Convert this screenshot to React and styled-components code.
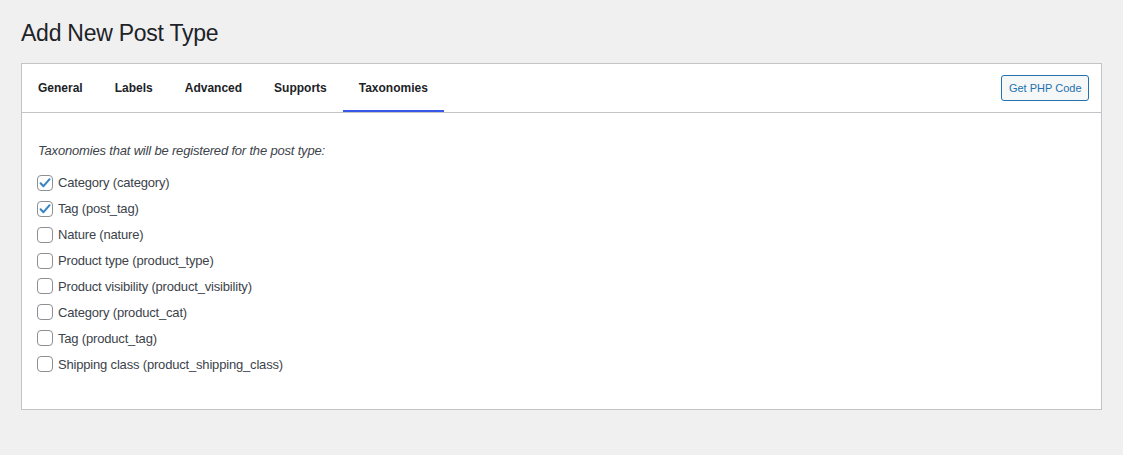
import React, { useState } from 'react';
import styled, { createGlobalStyle } from 'styled-components';

const GlobalStyle = createGlobalStyle`
  body {
    margin: 0;
    background: #f0f0f1;
    font-family: "Liberation Sans", Arial, sans-serif;
    color: #3c434a;
  }
`;

const TABS = ['General', 'Labels', 'Advanced', 'Supports', 'Taxonomies'];

const TAXONOMIES = [
  { label: 'Category (category)', checked: true },
  { label: 'Tag (post_tag)', checked: true },
  { label: 'Nature (nature)', checked: false },
  { label: 'Product type (product_type)', checked: false },
  { label: 'Product visibility (product_visibility)', checked: false },
  { label: 'Category (product_cat)', checked: false },
  { label: 'Tag (product_tag)', checked: false },
  { label: 'Shipping class (product_shipping_class)', checked: false },
];

const App = () => {
  const [active, setActive] = useState('Taxonomies');
  const [items, setItems] = useState(TAXONOMIES);

  const toggle = (i) => {
    setItems(items.map((it, idx) => (idx === i ? { ...it, checked: !it.checked } : it)));
  };

  return (
    <Wrap>
      <GlobalStyle />
      <Title>Add New Post Type</Title>
      <Card>
        <TabBar>
          <Tabs>
            {TABS.map((t) => (
              <Tab key={t} $active={t === active} onClick={() => setActive(t)}>
                {t}
              </Tab>
            ))}
          </Tabs>
          <CodeButton>Get PHP Code</CodeButton>
        </TabBar>

        <Body>
          <Intro>Taxonomies that will be registered for the post type:</Intro>
          <List>
            {items.map((it, i) => (
              <Row key={it.label} onClick={() => toggle(i)}>
                <Box>
                  {it.checked && (
                    <svg width="16" height="16" viewBox="0 0 16 16">
                      <path
                        d="M3.6 8.2l2.9 3L12.6 4.2"
                        fill="none"
                        stroke="#3582c4"
                        strokeWidth="2"
                        strokeLinecap="round"
                        strokeLinejoin="round"
                      />
                    </svg>
                  )}
                </Box>
                {it.label}
              </Row>
            ))}
          </List>
        </Body>
      </Card>
    </Wrap>
  );
};

export default App;

// --- styles ---

const Wrap = styled.div`
  padding: 10px 21px 20px 21px;
`;

const Title = styled.h1`
  margin: 0 0 10px;
  padding: 9px 0 4px;
  font-size: 23px;
  font-weight: 400;
  line-height: 1.3;
  letter-spacing: -0.25px;
  color: #1d2327;
`;

const Card = styled.div`
  background: #fff;
  border: 1px solid #c3c4c7;
`;

const TabBar = styled.div`
  display: flex;
  align-items: center;
  justify-content: space-between;
  border-bottom: 1px solid #c3c4c7;
  padding-right: 12px;
`;

const Tabs = styled.div` display: flex; `;

const Tab = styled.div`
  height: 48px;
  box-sizing: border-box;
  padding: 2px 16px 0;
  display: flex;
  align-items: center;
  font-size: 12px;
  font-weight: 600;
  color: #1d2327;
  cursor: pointer;
  border-bottom: 2px solid ${(p) => (p.$active ? '#3858e9' : 'transparent')};
`;

const CodeButton = styled.button`
  height: 26px;
  padding: 0 6.5px;
  font-family: inherit;
  font-size: 11px;
  color: #2271b1;
  background: #f6f7f7;
  border: 1px solid #2271b1;
  border-radius: 3px;
  cursor: pointer;
`;

const Body = styled.div`
  padding: 29px 16px 32px;
`;

const Intro = styled.p`
  margin: 0 0 10px;
  font-size: 13px;
  line-height: 18px;
  letter-spacing: -0.18px;
  font-style: italic;
  color: #3c434a;
`;

const List = styled.div` display: flex; flex-direction: column; `;

const Row = styled.label`
  display: flex;
  align-items: center;
  gap: 5px;
  height: 25.9px;
  font-size: 13px;
  letter-spacing: -0.18px;
  color: #3c434a;
  cursor: pointer;
`;

const Box = styled.span`
  width: 16px;
  height: 16px;
  margin-left: -1px;
  box-sizing: border-box;
  border: 1px solid #8c8f94;
  border-radius: 4px;
  background: #fff;
  display: flex;
  align-items: center;
  justify-content: center;
  flex-shrink: 0;
  svg { margin: -1px; }
`;
